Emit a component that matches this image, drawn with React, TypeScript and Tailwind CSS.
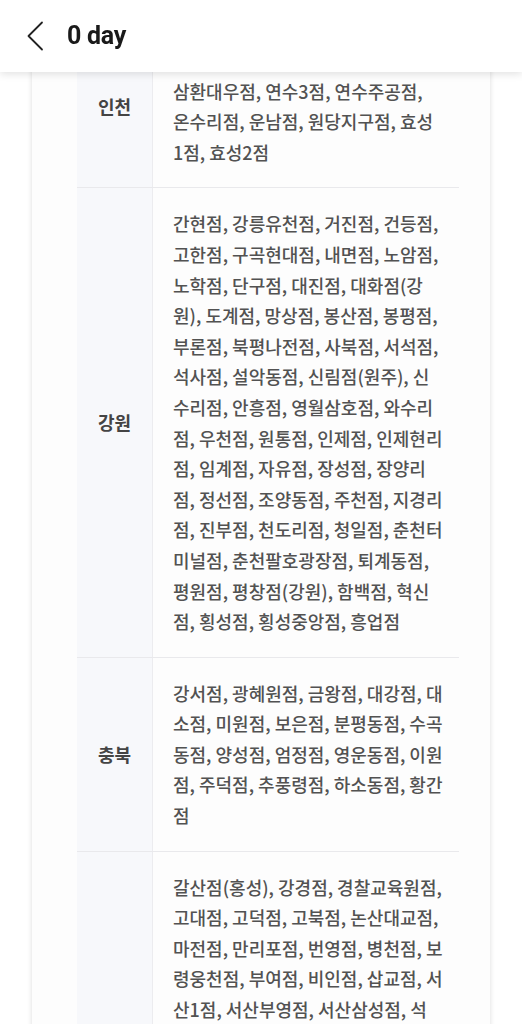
const regions = [
  {
    name: "인천",
    stores:
      "계양점, 남동공단점, 부개점, 부평점, 삼환대우점, 연수3점, 연수주공점, 온수리점, 운남점, 원당지구점, 효성1점, 효성2점",
  },
  {
    name: "강원",
    stores:
      "간현점, 강릉유천점, 거진점, 건등점, 고한점, 구곡현대점, 내면점, 노암점, 노학점, 단구점, 대진점, 대화점(강원), 도계점, 망상점, 봉산점, 봉평점, 부론점, 북평나전점, 사북점, 서석점, 석사점, 설악동점, 신림점(원주), 신수리점, 안흥점, 영월삼호점, 와수리점, 우천점, 원통점, 인제점, 인제현리점, 임계점, 자유점, 장성점, 장양리점, 정선점, 조양동점, 주천점, 지경리점, 진부점, 천도리점, 청일점, 춘천터미널점, 춘천팔호광장점, 퇴계동점, 평원점, 평창점(강원), 함백점, 혁신점, 횡성점, 횡성중앙점, 흥업점",
  },
  {
    name: "충북",
    stores:
      "강서점, 광혜원점, 금왕점, 대강점, 대소점, 미원점, 보은점, 분평동점, 수곡동점, 양성점, 엄정점, 영운동점, 이원점, 주덕점, 추풍령점, 하소동점, 황간점",
  },
  {
    name: "충남",
    stores:
      "갈산점(홍성), 강경점, 경찰교육원점, 고대점, 고덕점, 고북점, 논산대교점, 마전점, 만리포점, 번영점, 병천점, 보령웅천점, 부여점, 비인점, 삽교점, 서산1점, 서산부영점, 서산삼성점, 석문점, 성거점, 성환점, 송악점, 신례원점, 신창점, 아산배방점, 아산온천점, 안면도점, 연무점, 예산점, 온양점, 운산점, 웅천점, 유구점, 은행점, 장항점, 정산점, 천안두정점, 천안역점, 청양점, 탕정점, 태안점, 판교점(서천), 한산점, 합덕점, 해미점, 홍북점, 홍성점, 홍성내포점, 화양점, 가야점, 광천점, 금산점, 대천점, 덕산점, 둔포점, 모산점, 배방점, 서천점, 신평점, 인주점, 입장점",
  },
]

export default function App() {
  return (
    <div className="min-h-screen bg-white font-['Roboto','Noto_Sans_CJK_KR',sans-serif]">
      <header className="fixed top-0 left-0 right-0 z-10 h-[72px] bg-white shadow-[0_2px_8px_rgba(0,0,0,0.12)] flex items-center">
        <button className="ml-[24px] w-[22px] h-[30px] flex items-center justify-center text-[#222]">
          <svg width="18" height="30" viewBox="0 0 18 30" fill="none">
            <path d="M16 1.5 L2.5 15 L16 28.5" stroke="currentColor" strokeWidth="1.8" strokeLinecap="round" strokeLinejoin="round" />
          </svg>
        </button>
        <h1 className="ml-[21px] text-[25px] font-bold text-[#1a1a1a] tracking-[-0.3px]">0 day</h1>
      </header>

      <main className="pt-[25px]">
        <div className="mx-[32px] bg-[#fdfdfd] shadow-[0_0_5px_rgba(0,0,0,0.14)] pl-[45px] pr-[31px]">
          {regions.map((r, i) => (
            <div
              key={r.name}
              className={
                i === 0
                  ? "flex"
                  : "flex border-t border-[#e9e9ec]"
              }
            >
              <div className="w-[76px] shrink-0 bg-[#f7f8fb] flex items-center justify-center border-r border-[#ececef] text-[18px] font-bold text-[#444] font-['Noto_Sans_CJK_KR',sans-serif]">
                {r.name}
              </div>
              <div className="flex-1 pl-[20px] pr-[16px] py-[20px] text-[18px] leading-[1.7] font-medium text-[#525252] font-['Noto_Sans_CJK_KR',sans-serif]">
                {r.stores}
              </div>
            </div>
          ))}
        </div>
      </main>
    </div>
  )
}
